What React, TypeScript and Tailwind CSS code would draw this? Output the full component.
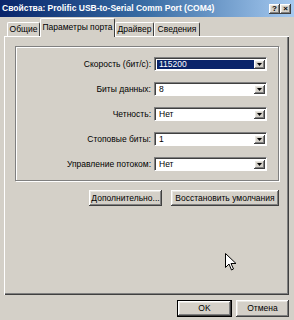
import React from 'react';

const RAISED =
  'shadow-[inset_-1px_-1px_#404040,inset_1px_1px_#ffffff,inset_-2px_-2px_#808080,inset_2px_2px_#e8e6e0]';

const ROWS = [
  { label: 'Скорость (бит/с):', value: '115200', selected: true },
  { label: 'Биты данных:', value: '8' },
  { label: 'Четность:', value: 'Нет' },
  { label: 'Стоповые биты:', value: '1' },
  { label: 'Управление потоком:', value: 'Нет' },
];

const TABS = [
  { label: 'Общие', w: 'w-[33px]' },
  { label: 'Параметры порта', w: 'w-[75px]', active: true },
  { label: 'Драйвер', w: 'w-[39px]' },
  { label: 'Сведения', w: 'w-[46px]' },
];

function Combo({ value, selected }: { value: string; selected?: boolean }) {
  return (
    <div className="flex h-[14px] w-[113px] border border-t-[#808080] border-l-[#808080] border-b-white border-r-white">
      <div className="flex flex-1 border-t border-l border-t-[#404040] border-l-[#404040] bg-white p-px">
        <div
          className={
            selected
              ? 'flex flex-1 items-center bg-[#0a246a] pl-[2px] text-white'
              : 'flex flex-1 items-center pl-[2px] text-black'
          }
        >
          {value}
        </div>
        <div className={`flex w-[11px] items-center justify-center bg-[#d4d0c8] ${RAISED}`}>
          <svg width="5" height="3" viewBox="0 0 5 3">
            <path d="M0 0h5L2.5 3z" fill="#000" />
          </svg>
        </div>
      </div>
    </div>
  );
}

function Button({ children, w, isDefault }: { children: React.ReactNode; w: string; isDefault?: boolean }) {
  return (
    <div
      className={`flex items-center justify-center whitespace-nowrap bg-[#d4d0c8] text-black ${w} ${
        isDefault ? 'border border-black' : ''
      } ${RAISED}`}
    >
      {children}
    </div>
  );
}

export default function App() {
  return (
    <div className="relative h-[320px] w-[294px] overflow-hidden bg-[#d4d0c8] font-['Liberation_Sans',Arial,sans-serif] text-[8.5px] leading-none">
      {/* title bar */}
      <div className="flex h-[17px] items-center bg-linear-to-r from-[#0a246a] via-[#3a6ea5] to-[#a6caf0] pl-[2px] pr-[3px]">
        <div className="flex-1 whitespace-nowrap text-[8.5px] font-bold text-white">
          Свойства: Prolific USB-to-Serial Comm Port (COM4)
        </div>
        <div className={`flex h-[10px] w-[11px] items-center justify-center bg-[#d4d0c8] text-[8px] font-bold text-black ${RAISED}`}>
          ?
        </div>
        <div className={`flex h-[10px] w-[11px] items-center justify-center bg-[#d4d0c8] text-[8px] font-bold text-black ${RAISED}`}>
          ×
        </div>
      </div>

      {/* tabs */}
      <div className="relative z-10 mt-px flex h-[18px] items-end pl-[7px]">
        {TABS.map((t) => (
          <div
            key={t.label}
            className={
              t.active
                ? `-mb-px flex h-[19px] ${t.w} items-center justify-center whitespace-nowrap rounded-t-[2px] border-t border-l border-r border-t-white border-l-white border-r-[#404040] bg-[#d4d0c8] pb-[2px] text-black`
                : `flex h-[14px] ${t.w} items-center justify-center whitespace-nowrap rounded-t-[2px] border-t border-l border-r border-t-white border-l-white border-r-[#404040] text-black`
            }
          >
            {t.label}
          </div>
        ))}
      </div>

      {/* tab panel */}
      <div className="ml-[4px] h-[259px] w-[285px] border-t border-l border-t-white border-l-white shadow-[inset_-1px_-1px_#404040,inset_-2px_-2px_#808080] px-[10px] pt-[9px]">
        <div className="flex h-[135px] w-[264px] flex-col gap-[11px] border border-[#808080] pt-[10px] shadow-[1px_1px_0_#ffffff,inset_1px_1px_0_#ffffff]">
          {ROWS.map((r) => (
            <div key={r.label} className="flex items-center">
              <div className="w-[136px] whitespace-nowrap pr-[1px] text-right text-black">{r.label}</div>
              <div className="ml-[2px]">
                <Combo value={r.value} selected={r.selected} />
              </div>
            </div>
          ))}
        </div>

        <div className="mt-[9px] flex w-[264px] justify-end gap-[9px]">
          <Button w="w-[73px] h-[16px]">Дополнительно...</Button>
          <Button w="w-[108px] h-[16px]">Восстановить умолчания</Button>
        </div>
      </div>

      {/* dialog buttons */}
      <div className="mt-[5px] flex justify-end gap-[4px] pr-[5px]">
        <Button w="w-[55px] h-[17px]" isDefault>
          OK
        </Button>
        <Button w="w-[53px] h-[17px]">Отмена</Button>
      </div>

      {/* mouse pointer */}
      <svg className="absolute left-[225px] top-[253px]" width="12" height="18" viewBox="0 0 12 18">
        <path d="M0.5 0.5v14l3.5-3.5 2.5 6 2-1-2.5-5.5h5z" fill="#fff" stroke="#000" strokeWidth="1" />
      </svg>
    </div>
  );
}
